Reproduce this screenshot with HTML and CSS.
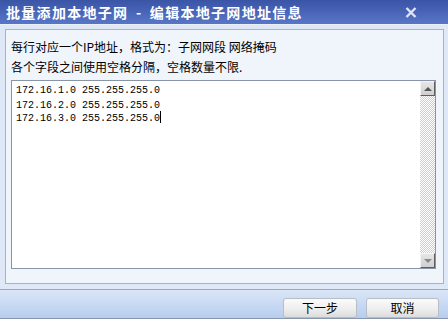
FILE: index.html
```html
<!DOCTYPE html>
<html lang="zh-CN">
<head>
    <meta charset="UTF-8">
    <title>批量添加本地子网</title>
    <link rel="stylesheet" href="styles.css">
</head>
<body>
<div class="window">
    <div class="titlebar">
        <span class="title">批量添加本地子网 - 编辑本地子网地址信息</span>
        <svg class="close" width="12" height="11" viewBox="0 0 12 11">
            <path d="M1.5 1 L10.5 10 M10.5 1 L1.5 10" stroke="#dfe5f6" stroke-width="2.4" fill="none"/>
        </svg>
    </div>
    <div class="main">
        <div class="panel">
            <div class="hint">每行对应一个IP地址，格式为：子网网段 网络掩码</div>
            <div class="hint">各个字段之间使用空格分隔，空格数量不限.</div>
            <div class="editor">
                <div class="lines">
                    <div class="line first">172.16.1.0 255.255.255.0</div>
                    <div class="line">172.16.2.0 255.255.255.0</div>
                    <div class="line">172.16.3.0 255.255.255.0<span class="caret"></span></div>
                </div>
                <div class="scrollbar">
                    <div class="arrow up"><span class="tri"></span></div>
                    <div class="track"></div>
                    <div class="arrow down"><span class="tri"></span></div>
                </div>
            </div>
        </div>
    </div>
    <div class="footer">
        <button type="button" class="btn next">下一步</button>
        <button type="button" class="btn">取消</button>
    </div>
</div>
</body>
</html>
```

FILE: styles.css
```css
body {
    margin: 0;
    background: #dfe8f6;
    font-family: "Noto Sans CJK SC", "Liberation Sans", sans-serif;
    font-size: 12px;
    color: #000;
}
.window {
    width: 448px;
    height: 319px;
    display: flex;
    flex-direction: column;
    overflow: hidden;
}
.titlebar {
    height: 24px;
    flex: none;
    display: flex;
    align-items: center;
    justify-content: space-between;
    padding: 0 31px 0 6px;
    background: linear-gradient(#3a54a6, #4c68bb 60%, #5876c6);
    border-bottom: 1px solid #eaf0fa;
}
.title {
    color: #fff;
    font-size: 14px;
    font-weight: bold;
    letter-spacing: 1.3px;
    word-spacing: 3px;
    line-height: 24px;
    white-space: nowrap;
}
.close {
    display: block;
}
.main {
    padding: 4px 4px 0 5px;
}
.panel {
    height: 246px;
    border: 1px solid #a6b3c6;
    background: #f0f5fc;
    padding: 7px 7px 0 5px;
}
.hint {
    height: 20px;
    line-height: 20px;
    white-space: nowrap;
}
.editor {
    margin-top: 3px;
    height: 187px;
    border: 1px solid #8994a6;
    background: #fff;
    display: flex;
}
.lines {
    flex: 1;
    padding: 4px 0 0 4px;
    font-family: "Liberation Mono", "DejaVu Sans Mono", monospace;
    font-size: 10px;
}
.line {
    height: 11px;
    line-height: 11px;
    white-space: pre;
}
.line.first {
    margin-bottom: 4px;
}
.caret {
    display: inline-block;
    width: 1px;
    height: 12px;
    background: #000;
    vertical-align: -2px;
}
.scrollbar {
    width: 15px;
    display: flex;
    flex-direction: column;
}
.arrow {
    height: 15px;
    box-sizing: border-box;
    border: 1px solid;
    border-color: #f4f4f4 #5e5e5e #5e5e5e #f4f4f4;
    background: linear-gradient(#e6e6e6, #cfcfcf);
    display: flex;
    align-items: center;
    justify-content: center;
}
.tri {
    width: 0;
    height: 0;
    border-left: 4px solid transparent;
    border-right: 4px solid transparent;
}
.up .tri {
    border-bottom: 4px solid #555;
}
.down .tri {
    border-top: 4px solid #888;
}
.track {
    flex: 1;
    background: repeating-conic-gradient(#cfcfcf 0 25%, #fff 0 50%) 0 0 / 2px 2px;
}
.footer {
    margin-top: 5px;
    flex: 1;
    border-top: 1px solid #9aa9be;
    border-bottom: 1px solid #8897ad;
    background: linear-gradient(#dae6f7, #b7cdef);
    display: flex;
    justify-content: flex-end;
    align-items: flex-start;
    gap: 9px;
    padding: 8px 9px 0 0;
}
.btn {
    width: 73px;
    height: 20px;
    border: 1px solid #b9bec6;
    border-radius: 3px;
    background: linear-gradient(#fbfbfb, #eeeeee 55%, #dcdcdc);
    font-family: "Noto Sans CJK SC", sans-serif;
    font-size: 12px;
    line-height: 16px;
    padding: 0;
    color: #000;
}
.btn.next {
    width: 74px;
}
```
